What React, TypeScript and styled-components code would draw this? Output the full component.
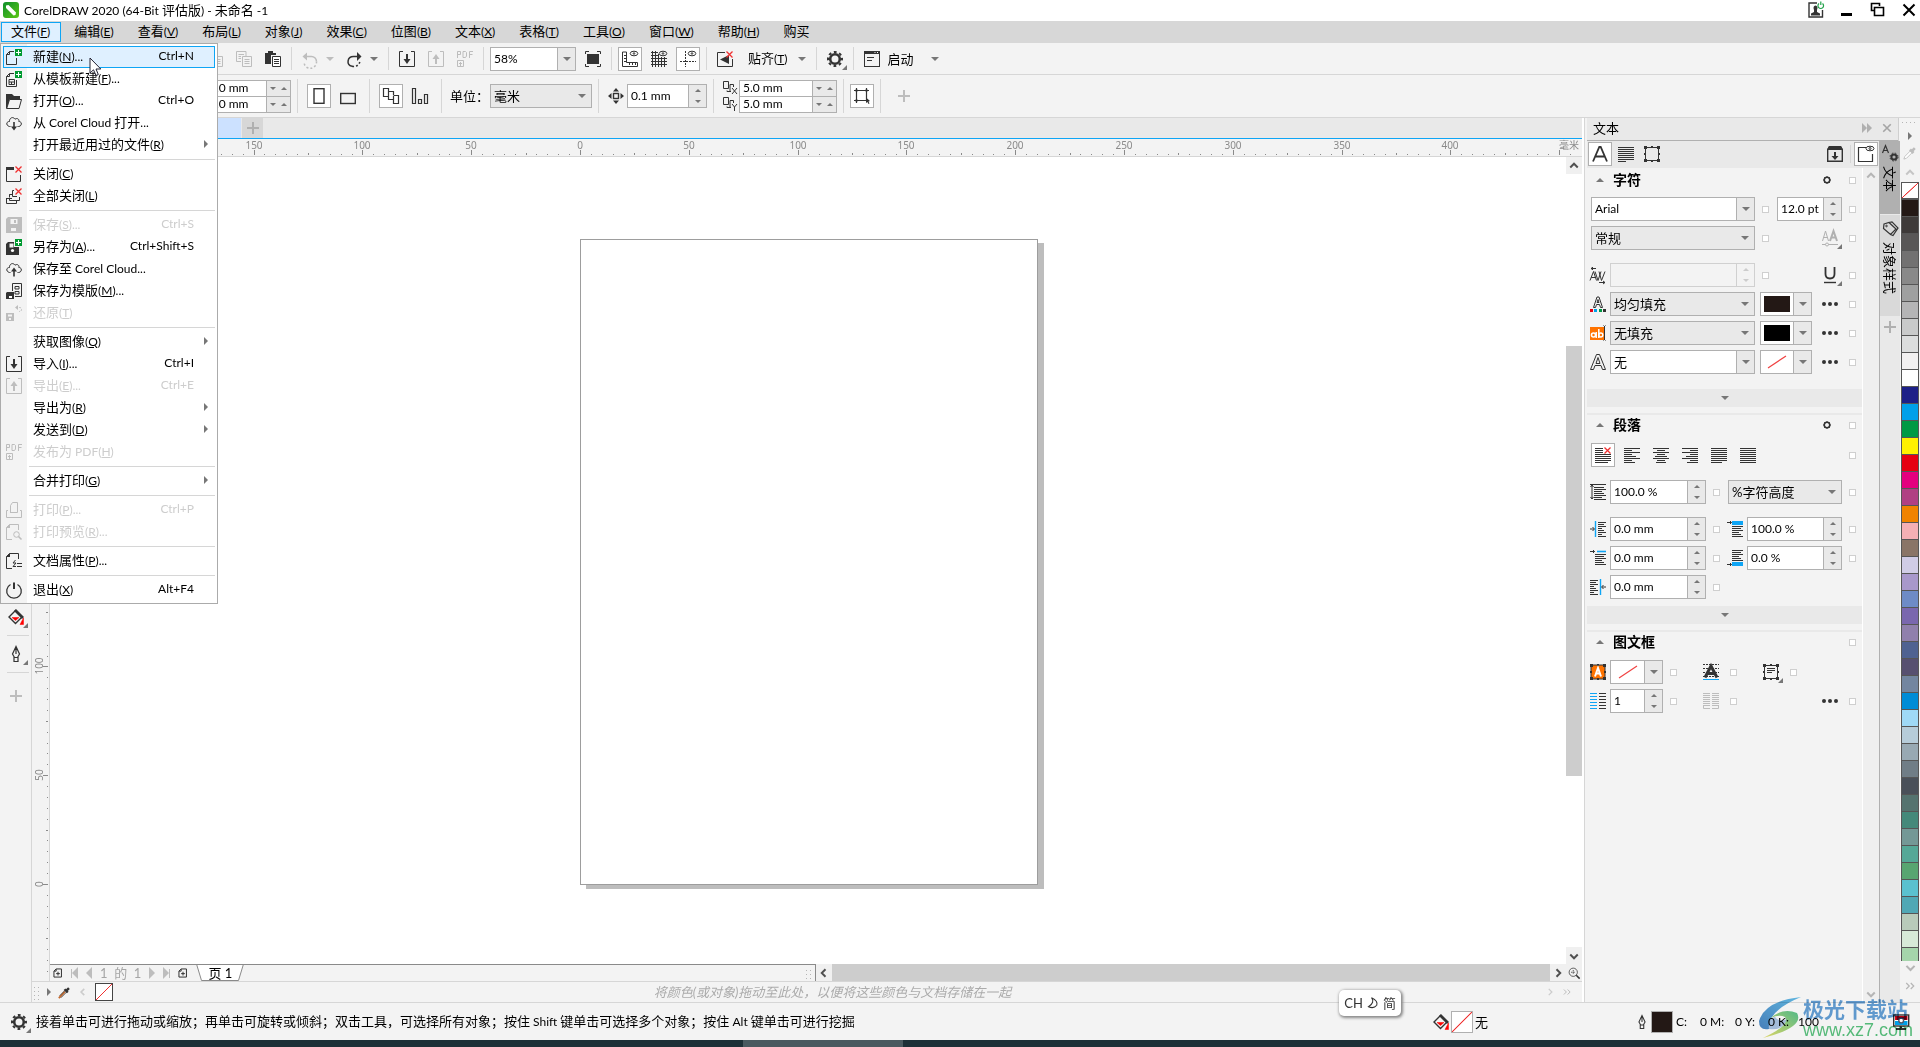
import React, { Fragment, ReactNode } from "react";
import styled, { createGlobalStyle, css } from "styled-components";

const c = {
  bar: "#f3f3f3",
  mid: "#e9e9e9",
  line: "#d6d6d6",
  edge: "#b0b0b0",
  ink: "#333333",
  off: "#bdbdbd",
  blue: "#0ea5f5",
  hot: "#dff0ff",
  grey: "#777777",
};

const Global = createGlobalStyle`
  *, *::before, *::after { box-sizing: border-box; }
  body { margin: 0; overflow: hidden; background: #fff; }
  body, button, input, select {
    font-family: Lato, "Noto Sans CJK SC", sans-serif;
    font-size: 13px;
    line-height: 16px;
    color: #000;
  }
  button { border: 0; padding: 0; background: none; }
  svg { display: block; flex: none; }
`;

/* ---------- text ---------- */

const Latin = styled.span`
  font-size: 12px;
`;

/* Latin runs are set one size below the Chinese; "&X" marks the access key. */
function Label({ text }: { text: string }) {
  const runs = text.match(/[\x20-\x7e…]+|[^\x20-\x7e…]+/g) || [];
  return (
    <span>
      {runs.map((r, i) => {
        if (!/[\x20-\x7e…]/.test(r)) return <Fragment key={i}>{r}</Fragment>;
        const at = r.indexOf("&");
        return (
          <Latin key={i}>
            {at < 0 ? r : (
              <>
                {r.slice(0, at)}
                <u>{r[at + 1]}</u>
                {r.slice(at + 2)}
              </>
            )}
          </Latin>
        );
      })}
    </span>
  );
}

/* ---------- icons, 16 x 16 ---------- */

const Svg = styled.svg.attrs({ viewBox: "0 0 16 16", "aria-hidden": true })<{ $s?: number; $c?: string }>`
  width: ${(p) => p.$s || 16}px;
  height: ${(p) => p.$s || 16}px;
  color: ${(p) => p.$c || c.ink};
  fill: none;
  stroke: currentColor;
  overflow: visible;
`;

const plusBadge = (
  <g stroke="none">
    <rect x="9" y="0" width="7" height="7" fill="#009a30" />
    <path d="M12 1h1v2h2v1h-2v2h-1v-2h-2v-1h2z" fill="#fff" />
  </g>
);
const redX = <path d="M9.5 .5l6 6M15.5 .5l-6 6" stroke="#f03030" strokeWidth="1.3" />;
const fillDot = { fill: "currentColor", stroke: "none" };
const lines = (rows: [number, number][], step = 2) => (
  <path d={rows.map(([a, b], i) => `M${a} ${i * step + 1.5}H${b}`).join("")} />
);
const frame = (
  <>
    <rect x="1.5" y="1.5" width="13" height="13" />
    <path {...fillDot} d="M0 0h3v3h-3zM13 0h3v3h-3zM0 13h3v3h-3zM13 13h3v3h-3zM7 0h2v2h-2zM7 14h2v2h-2zM0 7h2v2h-2zM14 7h2v2h-2z" />
  </>
);

const icons: Record<string, ReactNode> = {
  new: <><path d="M8 2.5H3.5L.5 5.5V15.5H10.5V9M.5 5.5H3.5V2.5" />{plusBadge}</>,
  template: <><path d="M8 2.5H3.5L.5 5.5V15.5H10.5V9M.5 5.5H3.5V2.5M3 8.5H8.500V13.500H3zM3 11H8.500M5.500 11V13.500" />{plusBadge}</>,
  open: <><path d="M.5 15V1.500H5.500L7 3.500H13.500V6" /><path {...fillDot} d="M0 1h6l2 2h6v3H4L1 15.500H0z" /><path d="M3.500 6.500H15.500L13 15.500H.7z" fill="#f3f3f3" /></>,
  cloudDown: <><path d="M4.500 11.500H3.500C-.5 10.500 .3 6.300 3.500 6.500C3.200 3 7 1 9 4.200C11.500 2.500 13.500 4.500 12.800 6.500C16.500 6.500 16 11.500 12.500 11.500H11.500" /><path d="M8 7V14" strokeWidth="1.600" /><path {...fillDot} d="M5 11.500h6L8 15.500z" /></>,
  cloudUp: <><path d="M4.500 11.500H3.500C-.5 10.500 .3 6.300 3.500 6.500C3.200 3 7 1 9 4.200C11.500 2.500 13.500 4.500 12.800 6.500C16.500 6.500 16 11.500 12.500 11.500H11.500" /><path d="M8 9V15.500" strokeWidth="1.600" /><path {...fillDot} d="M5 10.500h6L8 6.500z" /></>,
  close: <><path d="M8 1.500H.5V15.500H14.500V9" /><path {...fillDot} d="M0 1h8v3h-8z" />{redX}</>,
  closeAll: <><path d="M8 2.500H6.500V5M5 6.500H3.500V9M.5 10V15.500H10.500V13M.5 10.500H6M3.500 9.500V12.500H13.500V9M6.500 5V8.500H11M3.500 6.500H7" />{redX}</>,
  save: <><path {...fillDot} d="M2 0h14v16H0V2z" /><path d="M4.500 2h7v5h-7z" fill="#f3f3f3" stroke="none" /><path {...fillDot} d="M8 3h2v3h-2z" /><path d="M5 11h5v3h-5z" fill="#f3f3f3" stroke="none" /></>,
  saveAs: <><path {...fillDot} d="M2 3h6v5h5v8H0V5z" /><path d="M3.500 4.500h4v4h-4z" fill="#f3f3f3" stroke="none" /><circle cx="6.500" cy="11.500" r="1.600" fill="#fff" stroke="none" />{plusBadge}</>,
  saveTemplate: <><path d="M6.500 .5H15.500V13.500H9M6.500 .5V8M9 3.500H13V6H9zM9 8.500H13V11H9z" /><path {...fillDot} d="M1 9h7v7H0v-6z" /><path d="M3 13h3v2h-3z" fill="#fff" stroke="none" /></>,
  revert: <><path {...fillDot} d="M0 8h8v8h-8z" /><path d="M2 9.500h4v2h-4zM3 13h2v2h-2z" fill="#f3f3f3" stroke="none" /><path d="M10 2.500H13.500Q15.500 2.500 15.500 4.500T13 6.500" strokeDasharray="2 1" /><path {...fillDot} d="M9 2.500l3-2.500v5z" /></>,
  import: <><path d="M4 .5H.5V15.500H15.500V.5H12" /><path d="M8 3V9" strokeWidth="2" /><path {...fillDot} d="M4.500 8h7L8 13z" /></>,
  export: <><path d="M4 .5H.5V15.500H15.500V.5H12" /><path d="M8 13V7" strokeWidth="2" /><path {...fillDot} d="M4.500 8h7L8 3z" /></>,
  pdf: <><path d="M.5 7V.5H3.500V3.500H.5M6 .5H8.500L9.500 1.500V5L8.500 6.500H6zM12.500 7V.5H16M12.500 3.500H15.500" /><path d="M.5 9.500V15.500H6.500V9.500H.5M3.500 15V11M2 12.500H5" /></>,
  print: <><path d="M4.500 11V3.500L6.500 .5H11.500V10.500H4.500M2 8.500H.5V15.500H15.500V8.500H14" /></>,
  preview: <><path d="M6 15.500H.5V3.500L3.500 .5H12.500V6" /><path {...fillDot} d="M0 4l4-4v4z" /><circle cx="10.500" cy="10.500" r="2.800" /><path d="M12.500 12.500L15.500 15.500" strokeWidth="1.600" /></>,
  props: <><path d="M6 15.500H.5V3.500L3.500 .5H12.500V6M7 13.500H10M11 10.500H16M11 13.500H16M9.500 7L7 10H10L7 13.500" /><path {...fillDot} d="M0 4l4-4v4z" /></>,
  exit: <><path d="M4.500 2.500A7.300 7.300 0 1 0 11.500 2.500" strokeWidth="1.300" /><path d="M8 .5V7" strokeWidth="2" /></>,
  copy: <><path d="M10 5V.5H.5V10.500H5M2.500 3.500H8M2.500 5.500H5M2.500 7.500H5M6.500 5.500H15.500V15.500H6.500zM8.500 8.500H13.500M8.500 10.500H13.500M8.500 12.500H13.500" /></>,
  paste: <><path {...fillDot} d="M0 2h3V0h5v2h3v2H6v9H0z" /><path d="M7.500 5.500H15.500V15.500H7.500zM9 8.500H14M9 10.500H14M9 12.500H14" fill="#fff" /></>,
  undo: <><path d="M4 5.500H9A5 5 0 0 1 14.500 10.500" strokeWidth="1.500" /><path d="M14.500 10.500A5.500 5.500 0 0 1 2 11.500" strokeWidth="1.500" strokeDasharray="2 2" /><path {...fillDot} d="M.5 5.500L5 1.500v8z" /></>,
  redo: <><path d="M12 5.500H7.500A5.500 5 0 0 0 6 15.300" strokeWidth="1.500" /><path d="M6 15.300Q12.500 16.500 14.300 9.500" strokeWidth="1.500" strokeDasharray="2 2" /><path {...fillDot} d="M15.500 5.500L11 1v9z" /></>,
  full: <><path d="M4 .5H.5V3M12 .5H15.500V3M.5 13V15.500H4M15.500 13V15.500H12" /><path {...fillDot} d="M2 3h12v10h-12z" /></>,
  rulers: <><path d="M.5 1V15.500H15.500V11.500H4.500V1zM2 4.500H4M2 7.500H4M2 10.500H4M7.500 12V14M10.500 12V14M13.500 12V14" /><ellipse cx="12" cy="2.500" rx="3.800" ry="2.300" /><circle cx="12" cy="2.500" r=".8" /></>,
  grid: <><path d="M0 1.500H7M0 4.500H8M0 7.500H16M0 10.500H16M0 13.500H16M1.500 0V16M4.500 0V16M7.500 3V16M10.500 6V16M13.500 6V16" /><ellipse cx="12" cy="2.500" rx="3.800" ry="2.300" /><circle cx="12" cy="2.500" r=".8" /></>,
  guides: <><path d="M5.500 0V16" strokeDasharray="2 1" /><path d="M0 10.500H16" strokeDasharray="2 1" /><ellipse cx="12" cy="2.500" rx="3.800" ry="2.300" /><circle cx="12" cy="2.500" r=".8" /></>,
  snap: <><path d="M8 1.500H.5V15.500H15.500V8" /><path {...fillDot} d="M3 8.500L12 4v9z" />{redX}</>,
  gear: <><circle cx="8" cy="8" r="4.800" strokeWidth="2.600" /><circle cx="8" cy="8" r="7" strokeWidth="2" strokeDasharray="2.800 2.700" strokeDashoffset="1.400" /></>,
  cog: <><circle cx="8" cy="8" r="5.500" strokeWidth="3" /><path d="M8 0V3M8 13V16M0 8H3M13 8H16M2.500 2.500L4.500 4.500M13.500 2.500L11.500 4.500M2.500 13.500L4.500 11.500M13.500 13.500L11.500 11.500" strokeWidth="2" /></>,
  launch: <><rect x=".5" y=".5" width="15" height="15" /><path {...fillDot} d="M0 0h16v3h-16z" /><path d="M10.500 1.500h1M13 1.500h1" stroke="#fff" /><path d="M3 6.500H10M3 9.500H8" /></>,
  portrait: <rect x="3" y=".7" width="10" height="14.600" strokeWidth="1.400" />,
  landscape: <rect x=".7" y="5.500" width="14.600" height="10" strokeWidth="1.400" />,
  pages: <><path d="M5.500 4V.5H.5V8.500H5.500M10.500 7V3.500H5.500V11.500H10.500V8M10.500 7.500H15.500V15.500H10.500V11" strokeWidth="1.200" /></>,
  bars: <><path d="M.5 .5H3.500V15.500H.5zM6.500 11.500H9.500V15.500H6.500zM12.500 6.500H15.500V15.500H12.500z" strokeWidth="1.200" /></>,
  nudge: <><rect x="5.500" y="5.500" width="5" height="5" strokeWidth="1.400" /><path {...fillDot} d="M8 0l3 3.500H5zM8 16l3-3.500H5zM0 8l3.500-3v6zM16 8l-3.500-3v6z" /></>,
  bounds: <><path d="M2.500 2.500H12.500V12.500H2.500zM0 2.500H15M0 12.500H10M2.500 0V15M12.500 0V9" strokeWidth="1.200" /><path {...fillDot} d="M1.500 1.500h2v2h-2zM11.500 1.500h2v2h-2zM1.500 11.500h2v2h-2zM12 9.500l4 3.500-1.500.5 1 2-1 .5-1-2-1.500 1z" /></>,
  A: <path d="M1 15.500L7.300 1H8.700L15 15.500M3.500 10.500H12.500" strokeWidth="1.800" />,
  para: lines([[0, 16], [0, 16], [0, 16], [0, 16], [0, 16], [0, 16], [0, 16], [0, 8]]),
  frame,
  dockImport: <><path d="M2.500 .7H13.500L15.300 3.500V15.300H.7V3.500z" strokeWidth="1.400" /><path {...fillDot} d="M2 0h12l2 4h-16z" /><path d="M8 6V11" strokeWidth="2" /><path {...fillDot} d="M4.500 10h7L8 14z" /></>,
  dockView: <><path d="M8 1.500H.5V15.500H14.500V8" strokeWidth="1.200" /><ellipse cx="12" cy="2.500" rx="4" ry="2.300" /><circle cx="12" cy="2.500" r="1" /></>,
  kern: <><path d="M0 13.500L3.500 4.500L6.500 13.500M1.200 10.500H5.500M5 4.500L8 13.500L11 4.500M9 4.500L11.500 13.500L15 4.500" /><path d="M1 1.500H6M3 .2L1 1.500L3 2.800M9 15.500H15M13 14L15 15.500L13 17" /></>,
  fillA: <><path d="M3.500 11.500L7 1H9L12.500 11.500H10.500L9.500 8.500H6.500L5.500 11.500zM7 6.500L8 3.500L9 6.500z" /><g stroke="none"><path d="M0 13h3v3h-3z" fill="#e60012" /><path d="M4 13h3v3h-3z" fill="#00a0e9" /><path d="M9 13h3v3h-3z" fill="#009944" /><path d="M13 13h3v3h-3z" fill="#333" /></g></>,
  fillAb: <><path d="M0 2h14v13h-14z" fill="#ff7300" stroke="none" /><circle cx="3.500" cy="10" r="2" stroke="#fff" strokeWidth="1.600" /><path d="M6.200 7V13M8.800 4V13" stroke="#fff" strokeWidth="1.500" /><circle cx="10.800" cy="10" r="2" stroke="#fff" strokeWidth="1.500" /><path d="M13.500 .5l1 1l1-1M14.500 1V15M13.500 15.500l1-1l1 1" /></>,
  outlineA: <path d="M.5 15.500L6.500 .5H9.500L15.500 15.500H12.500L11 11.500H5L3.500 15.500zM6 9.500L8 3.500L10 9.500z" />,
  caps: <><path d="M.5 11L3.500 1L6.500 11M1.500 7.500H5.500" /><path d="M8 11L11.500 1L15 11M9.500 7.500H14" strokeWidth="2" /><path d="M0 14.500H16" /><circle cx="5" cy="14.500" r="1.500" fill="#f3f3f3" /></>,
  under: <><path d="M3.500 0V7Q3.500 11.500 8 11.500T12.500 7V0" strokeWidth="1.800" /><path d="M2 15.500H14" strokeWidth="1.400" /></>,
  alNone: <><path d="M0 1.500H8M0 3.500H8M0 5.500H8M0 7.500H16M0 9.500H16M0 11.500H16M0 13.500H16M0 15.500H13" />{redX}</>,
  alLeft: lines([[0, 16], [0, 8], [0, 16], [0, 8], [0, 12], [0, 16], [0, 8], [0, 11]]),
  alCenter: lines([[0, 16], [4, 12], [0, 16], [4, 12], [2, 14], [0, 16], [4, 12], [3, 13]]),
  alRight: lines([[0, 16], [8, 16], [0, 16], [8, 16], [4, 16], [0, 16], [8, 16], [5, 16]]),
  alJust: lines([[0, 16], [0, 16], [0, 16], [0, 16], [0, 16], [0, 16], [0, 16], [0, 11]]),
  alFull: lines([[0, 16], [0, 16], [0, 16], [0, 16], [0, 16], [0, 16], [0, 16], [0, 16]]),
  leading: <><path d="M0 .5H16M4 3.500H14M4 5.500H16M4 7.500H12M4 9.500H14M4 11.500H16M4 13.500H12M4 15.500H16M2 1V15M.5 3L2 1L3.500 3M.5 13L2 15L3.500 13" /></>,
  indLeft: <><path d="M5.500 0V16" stroke={c.blue} strokeWidth="1.400" /><path d="M8 1.500H16M8 3.500H14M8 5.500H16M8 7.500H12M8 9.500H14M8 11.500H16M8 13.500H12M8 15.500H16M0 8H4M2.500 6L4.500 8L2.500 10" /></>,
  indFirst: <><path d="M7 1.500H16" stroke={c.blue} strokeWidth="1.600" /><path d="M5 4.500H16M5 6.500H14M5 8.500H16M5 10.500H12M5 12.500H14M5 14.500H16M0 1.500H4.500M3 0L4.500 1.500L3 3" /></>,
  indRight: <><path d="M10.500 0V16" stroke={c.blue} strokeWidth="1.400" /><path d="M0 1.500H8M0 3.500H6M0 5.500H8M0 7.500H4M0 9.500H6M0 11.500H8M0 13.500H4M0 15.500H8M12 8H16M13.500 6L11.500 8L13.500 10" /></>,
  spBefore: <><path d="M5 0H16V4H5z" fill={c.blue} stroke="none" /><path d="M5 5.500H16M5 7.500H14M5 9.500H16M5 11.500H12M5 13.500H14M5 15.500H16M0 1.500H4.500M3 0L4.500 1.500L3 3" /></>,
  spAfter: <><path d="M5 12H16V16H5z" fill={c.blue} stroke="none" /><path d="M5 .5H16M5 2.500H14M5 4.500H16M5 6.500H12M5 8.500H14M5 10.500H16M0 14.500H4.500M3 13L4.500 14.500L3 16" /></>,
  boxA: <><rect x="1" y="1" width="14" height="14" fill="#ff7300" /><path {...fillDot} d="M0 0h3v3h-3zM13 0h3v3h-3zM0 13h3v3h-3zM13 13h3v3h-3zM7 0h2v2h-2zM7 14h2v2h-2zM0 7h2v2h-2zM14 7h2v2h-2z" /><path d="M5 12.500L8 4L11 12.500M6 9.500H10" stroke="#fff" strokeWidth="2" /></>,
  lineA: <><path d="M0 .5H16M0 4.500H16M0 8.500H16M0 12.500H16" strokeDasharray="2 1" /><path d="M2 13.500L8 2L14 13.500M5 9.500H11" strokeWidth="3" /><path d="M0 15.500H16" stroke={c.blue} /></>,
  frameText: <>{frame}<path d="M4 4.500H12M4 6.500H12M4 8.500H9" /></>,
  cols: <><path d="M0 .5H7M0 3.500H7M0 6.500H7M0 9.500H7M0 12.500H7M0 15.500H7" stroke={c.blue} /><path d="M9 .5H16M9 3.500H16M9 6.500H16M9 9.500H16M9 12.500H16M9 15.500H16" /></>,
  colsOff: <path d="M0 .5H7M0 2.500H7M0 4.500H7M0 6.500H7M0 8.500H7M0 10.500H7M0 12.500H7M.5 13V15.500H7M9 .5H16M9 2.500H16M9 4.500H16M9 6.500H16M9 8.500H16M9 10.500H16M9 12.500H16M9 15.500H15.500V13" />,
  dots: <path {...fillDot} d="M0 8a2 2 0 1 1 4 0a2 2 0 1 1-4 0zM6 8a2 2 0 1 1 4 0a2 2 0 1 1-4 0zM12 8a2 2 0 1 1 4 0a2 2 0 1 1-4 0z" />,
  plus: <path d="M8 2V14M2 8H14" strokeWidth="2" />,
  bucket: <><path d="M7.500 1.500L1 8L7.500 14.500L14 8z" strokeWidth="1.400" /><path {...fillDot} d="M8 0l8 8-2 2L6 2z" /><path d="M4 8.500h7l-3.500 3zM12 15.500h3.500V9z" fill="#f00" stroke="#f00" strokeWidth=".5" /></>,
  pen: <><path d="M8 .5L4.500 8L6.500 11.500H9.500L11.500 8zM6 11.500H10V15.500H6zM8 1V8" strokeWidth="1.200" /></>,
  dropper: <><path d="M1 15L2 12L8.500 5.500L10.500 7.500L4 14z" fill="#fff" /><path d="M8 4L12 8M10 6L13.500 2.500" strokeWidth="3" /></>,
  dropperDoc: <><path d="M1 15L8.500 7" stroke="#c66a2e" strokeWidth="2.200" /><path d="M3.500 14.500L10.500 7.500M2 12L8.500 5.500" /><path d="M8 4L12 8M10 6L13.500 2.500" strokeWidth="3" /></>,
  styles: <><path d="M2 3L7 1.500L14 8L8.500 13.500L1.500 7.500zM7 1.500L10 .8L16 7L11 14.500L8.500 13.500" strokeWidth="1.200" /><circle cx="4.500" cy="5" r=".8" /></>,
  styleA: <><path d="M.5 8L3.500 .5L6.500 8M1.500 5.500H5.500" strokeWidth="1.200" /><circle cx="12" cy="12" r="2.600" strokeWidth="2" /><circle cx="12" cy="12" r="4" strokeDasharray="1.600 1.600" /></>,
  zoomer: <><circle cx="7" cy="7" r="5.500" /><path d="M7 4V10M4 7H10" strokeDasharray="2 1" /><path d="M11 11L15.500 15.500" strokeWidth="2" /></>,
  monitor: <><rect x=".7" y="1" width="15" height="11" strokeWidth="1.400" fill="#fff" /><path d="M2 2h12.500v4H2z" fill="#e60012" stroke="none" /><path d="M2 7h12.500v4H2z" fill="#00a0e9" stroke="none" /><circle cx="8.200" cy="6.500" r="2.400" fill="#fff" stroke="#556" strokeWidth="1.400" /><path d="M3 15H13M8 12V15" strokeWidth="2" /></>,
  addPage: <path d="M1.500 14.500V5L5 1.500H13.500V14.500zM1.500 5H5V1.500M8 6V12M5 9H11" strokeWidth="1.600" />,
  user: <><path d="M9 1H1V15H14.500V8" strokeWidth="1.400" /><path {...fillDot} d="M3 13.500v-2l3-1.500v-2q-1.500-4 1.500-4.500q3 .5 1.500 4.500v2l3 1.500v2z" /><path d="M11 1.500A2.800 2.800 0 1 0 14.500 1.500M12.800-.5V3" stroke="#22a24a" strokeWidth="1.200" /></>,
};

function Icon({ n, s, col }: { n: string; s?: number; col?: string }) {
  return <Svg $s={s} $c={col}>{icons[n]}</Svg>;
}

const Tri = styled.i<{ $d?: "up" | "down" | "right" | "left"; $c?: string; $s?: number }>`
  flex: none;
  width: 0;
  height: 0;
  ${(p) => {
    const s = p.$s || 4;
    const k = p.$c || c.grey;
    const t = `${s}px solid transparent`;
    if (p.$d === "up") return css`border-left: ${t}; border-right: ${t}; border-bottom: ${s}px solid ${k};`;
    if (p.$d === "right") return css`border-top: ${t}; border-bottom: ${t}; border-left: ${s}px solid ${k};`;
    if (p.$d === "left") return css`border-top: ${t}; border-bottom: ${t}; border-right: ${s}px solid ${k};`;
    return css`border-left: ${t}; border-right: ${t}; border-top: ${s}px solid ${k};`;
  }}
`;

const chevrons = { up: "M3 10L8 5L13 10", down: "M3 6L8 11L13 6", left: "M10 3L5 8L10 13", right: "M6 3L11 8L6 13", dbl: "M3 4L7 8L3 12M9 4L13 8L9 12" };
function Chevron({ d, s = 12, col = "#505050", w = 2.6 }: { d: keyof typeof chevrons; s?: number; col?: string; w?: number }) {
  return <Svg $s={s} $c={col}><path d={chevrons[d]} strokeWidth={w} /></Svg>;
}

/* ---------- frame ---------- */

const Shell = styled.div`
  position: relative;
  height: 100vh;
  display: flex;
  flex-direction: column;
  background: ${c.bar};
  overflow: hidden;
`;

const TitleBar = styled.header`
  height: 21px;
  flex: none;
  display: flex;
  align-items: center;
  gap: 5px;
  padding: 0 3px 1px;
  background: #fff;
`;

const AppTitle = styled.h1`
  flex: 1;
  margin: 0;
  font-size: 13px;
  font-weight: 400;
  line-height: 18px;
`;

const WindowButtons = styled.div`
  display: flex;
  align-items: center;
  gap: 15px;
`;

const WinButton = styled.button`
  width: 16px;
  height: 16px;
`;

const MenuBar = styled.nav`
  position: relative;
  z-index: 5;
  flex: none;
  height: 22px;
  display: flex;
  align-items: center;
  gap: 3px;
  padding-left: 1px;
  background: #d7d7d7;
`;

const MenuButton = styled.button<{ $open?: boolean }>`
  height: 20px;
  padding: 0 10px 2px 9px;
  border: 1px solid ${(p) => (p.$open ? c.blue : "transparent")};
  background: ${(p) => (p.$open ? c.hot : "transparent")};
`;

const Dropdown = styled.div`
  position: absolute;
  left: 0;
  top: 22px;
  width: 218px;
  padding: 2px;
  border: 1px solid #ababab;
  background: linear-gradient(90deg, ${c.bar} 26px, #fff 26px);
`;

const Entry = styled.button<{ $hot?: boolean; $off?: boolean }>`
  width: 100%;
  height: 22px;
  display: grid;
  grid-template-columns: 17px 1fr auto 8px;
  column-gap: 10px;
  align-items: center;
  padding: 0 2px 2px;
  text-align: left;
  white-space: nowrap;
  color: ${(p) => (p.$off ? "#cdcdcd" : "#000")};
  border: 1px solid ${(p) => (p.$hot ? c.blue : "transparent")};
  background: ${(p) => (p.$hot ? c.hot : "transparent")};
  svg { margin-top: 2px; }
`;

const Shortcut = styled.span`
  font-size: 12px;
`;

const Rule = styled.hr`
  height: 1px;
  margin: 3px 0 3px 26px;
  border: 0;
  background: ${c.line};
`;

type Item = { t: string; i?: string; k?: string; off?: boolean; sub?: boolean; hot?: boolean } | null;
const fileMenu: Item[] = [
  { t: "新建(&N)...", i: "new", k: "Ctrl+N", hot: true },
  { t: "从模板新建(&F)...", i: "template" },
  { t: "打开(&O)...", i: "open", k: "Ctrl+O" },
  { t: "从 Corel Cloud 打开...", i: "cloudDown" },
  { t: "打开最近用过的文件(&R)", sub: true },
  null,
  { t: "关闭(&C)", i: "close" },
  { t: "全部关闭(&L)", i: "closeAll" },
  null,
  { t: "保存(&S)...", i: "save", k: "Ctrl+S", off: true },
  { t: "另存为(&A)...", i: "saveAs", k: "Ctrl+Shift+S" },
  { t: "保存至 Corel Cloud...", i: "cloudUp" },
  { t: "保存为模版(&M)...", i: "saveTemplate" },
  { t: "还原(&T)", i: "revert", off: true },
  null,
  { t: "获取图像(&Q)", sub: true },
  { t: "导入(&I)...", i: "import", k: "Ctrl+I" },
  { t: "导出(&E)...", i: "export", k: "Ctrl+E", off: true },
  { t: "导出为(&R)", sub: true },
  { t: "发送到(&D)", sub: true },
  { t: "发布为 PDF(&H)", i: "pdf", off: true },
  null,
  { t: "合并打印(&G)", sub: true },
  null,
  { t: "打印(&P)...", i: "print", k: "Ctrl+P", off: true },
  { t: "打印预览(&R)...", i: "preview", off: true },
  null,
  { t: "文档属性(&P)...", i: "props" },
  null,
  { t: "退出(&X)", i: "exit", k: "Alt+F4" },
];

function FileMenu() {
  return (
    <Dropdown role="menu" aria-label="文件">
      {fileMenu.map((m, i) =>
        m === null ? <Rule key={i} /> : (
          <Entry key={i} role="menuitem" $hot={m.hot} $off={m.off}>
            {m.i ? <Icon n={m.i} col={m.off ? c.off : undefined} /> : <span />}
            <Label text={m.t} />
            <Shortcut>{m.k}</Shortcut>
            {m.sub ? <Tri $d="right" /> : <span />}
          </Entry>
        )
      )}
    </Dropdown>
  );
}

const Pointer = styled.svg`
  position: absolute;
  z-index: 6;
  left: 89px;
  top: 57px;
  width: 13px;
  height: 20px;
`;

/* ---------- toolbars ---------- */

const Toolbar = styled.div<{ $h: number; $start: number }>`
  flex: none;
  height: ${(p) => p.$h}px;
  display: flex;
  align-items: center;
  padding-left: ${(p) => p.$start}px;
  border-bottom: 1px solid ${c.line};
  white-space: nowrap;
`;

const Divider = styled.i<{ $m?: number }>`
  align-self: stretch;
  width: 1px;
  margin: 4px ${(p) => p.$m ?? 6}px;
  background: ${c.line};
`;

const Tool = styled.button<{ $on?: boolean; $w?: number }>`
  flex: none;
  width: ${(p) => p.$w || 24}px;
  height: 24px;
  display: flex;
  align-items: center;
  justify-content: center;
  border: 1px solid ${(p) => (p.$on ? c.edge : "transparent")};
  background: ${(p) => (p.$on ? "#fff" : "transparent")};
`;

const WordTool = styled.button<{ $gap?: number }>`
  height: 24px;
  display: flex;
  align-items: center;
  gap: ${(p) => p.$gap || 10}px;
`;

const Gap = styled.i<{ $w: number }>`
  flex: none;
  width: ${(p) => p.$w}px;
`;

const Corner = styled.span`
  display: grid;
  > * { grid-area: 1 / 1; }
`;
const CornerMark = styled.i`
  align-self: end;
  justify-self: end;
  margin: 0 -4px -3px 0;
  border-left: 5px solid transparent;
  border-bottom: 5px solid ${c.grey};
`;

/* ---------- fields ---------- */

const FieldBox = styled.span<{ $w: number; $h?: number; $fill?: string; $dim?: boolean }>`
  flex: none;
  width: ${(p) => p.$w}px;
  height: ${(p) => p.$h || 24}px;
  display: flex;
  border: 1px solid ${(p) => (p.$dim ? "#d0d0d0" : c.edge)};
  background: ${(p) => p.$fill || "#fff"};
`;

const TextInput = styled.input`
  flex: 1;
  min-width: 0;
  width: 0;
  padding: 0 0 0 3px;
  border: 0;
  outline: 0;
  background: none;
  font-size: 12px;
`;

const Steps = styled.span<{ $row?: boolean; $dim?: boolean }>`
  width: ${(p) => (p.$row ? 24 : 18)}px;
  display: flex;
  flex-direction: ${(p) => (p.$row ? "row-reverse" : "column")};
  align-items: center;
  justify-content: space-around;
  border-left: 1px solid ${(p) => (p.$dim ? "#d0d0d0" : c.edge)};
  background: ${(p) => (p.$dim ? c.bar : c.mid)};
`;

const StepButton = styled.button`
  display: flex;
`;

function Spin({ w, v, name, row, h, dim }: { w: number; v: string; name: string; row?: boolean; h?: number; dim?: boolean }) {
  const col = dim ? "#cccccc" : c.grey;
  return (
    <FieldBox $w={w} $h={h} $dim={dim} $fill={dim ? c.bar : undefined}>
      <TextInput aria-label={name} defaultValue={v} disabled={dim} />
      <Steps $row={row} $dim={dim}>
        <StepButton aria-label={`${name} +`}><Tri $d="up" $s={3} $c={col} /></StepButton>
        <StepButton aria-label={`${name} -`}><Tri $s={3} $c={col} /></StepButton>
      </Steps>
    </FieldBox>
  );
}

const SelectBox = styled.span<{ $w: number; $white?: boolean }>`
  flex: none;
  width: ${(p) => p.$w}px;
  height: 24px;
  display: grid;
  border: 1px solid ${c.edge};
  background: ${(p) => (p.$white ? "#fff" : c.mid)};
  > * { grid-area: 1 / 1; }
`;

const NativeSelect = styled.select<{ $small?: boolean }>`
  appearance: none;
  width: 100%;
  padding: 0 18px 0 3px;
  border: 0;
  outline: 0;
  border-radius: 0;
  background: none;
  font-size: ${(p) => (p.$small ? 12 : 13)}px;
`;

const SelectArrow = styled.span<{ $white?: boolean }>`
  justify-self: end;
  width: 18px;
  display: flex;
  align-items: center;
  justify-content: center;
  pointer-events: none;
  ${(p) => p.$white && css`border-left: 1px solid ${c.edge}; background: ${c.mid};`}
`;

function Select({ w, v, name, white, small, id }: { w: number; v: string; name?: string; white?: boolean; small?: boolean; id?: string }) {
  return (
    <SelectBox $w={w} $white={white}>
      <NativeSelect id={id} aria-label={name} $small={small} defaultValue={v}><option>{v}</option></NativeSelect>
      <SelectArrow $white={white}><Tri /></SelectArrow>
    </SelectBox>
  );
}

const ColourFace = styled.span`
  flex: 1;
  display: flex;
  align-items: center;
  justify-content: center;
`;
const ColourChip = styled.i<{ $c: string }>`
  width: 26px;
  height: 16px;
  background: ${(p) => p.$c};
`;
const ColourButton = styled.button<{ $w: number }>`
  flex: none;
  width: ${(p) => p.$w}px;
  height: 24px;
  display: flex;
  align-items: stretch;
  border: 1px solid ${c.edge};
  background: #fff;
`;

function Colour({ w = 52, col, name }: { w?: number; col?: string; name: string }) {
  return (
    <ColourButton $w={w} aria-label={name}>
      <ColourFace>
        {col ? <ColourChip $c={col} /> : <svg width="20" height="14"><path d="M1 13L19 1" stroke="#f04040" strokeWidth="1.200" /></svg>}
      </ColourFace>
      <SelectArrow $white><Tri /></SelectArrow>
    </ColourButton>
  );
}

const Lock = styled.input.attrs({ type: "checkbox", "aria-label": "锁定" })`
  appearance: none;
  flex: none;
  width: 7px;
  height: 7px;
  margin: 0;
  border: 1px solid #cfcfcf;
  background: #fff;
`;

const Stack = styled.span`
  display: flex;
  flex-direction: column;
  > * + * { margin-top: -1px; }
`;

const DupIcons = styled.svg`
  width: 16px;
  height: 34px;
  margin-left: 3px;
  fill: none;
  stroke: ${c.ink};
`;

/* ---------- body ---------- */

const Body = styled.div`
  flex: 1;
  min-height: 0;
  display: flex;
`;

const Toolbox = styled.aside`
  flex: none;
  width: 32px;
  display: flex;
  flex-direction: column;
  align-items: center;
  padding-top: 487px;
  border-right: 1px solid ${c.line};
`;

const ToolboxRule = styled.i`
  width: 22px;
  height: 1px;
  margin: 6px 0 6px 5px;
  background: ${c.line};
`;

const Centre = styled.main`
  flex: 1;
  min-width: 0;
  display: flex;
  flex-direction: column;
`;

const DocTabs = styled.div`
  flex: none;
  height: 21px;
  display: flex;
  gap: 1px;
  padding-left: 100px;
  border-bottom: 1px solid ${c.blue};
  background: ${c.mid};
`;
const DocTab = styled.button`
  width: 109px;
  background: #cce1ff;
`;
const AddTab = styled.button`
  width: 21px;
  display: flex;
  align-items: center;
  justify-content: center;
  background: #d7d7d7;
`;

const RulerTop = styled.svg`
  width: 100%;
  height: 18px;
  border-bottom: 1px solid ${c.line};
`;
const RulerSide = styled.svg`
  width: 18px;
  height: 100%;
  border-right: 1px solid ${c.line};
`;
const RulerText = styled.text`
  font-family: "Noto Sans", "Noto Sans CJK SC", sans-serif;
  font-size: 10px;
  fill: #8a8a8a;
  text-anchor: middle;
`;

const STEP = 10.88; // one 5 mm division at 58 %

function TopRuler() {
  const zero = 548;
  const ticks = Array.from({ length: 132 }, (_, i) => i - 40);
  return (
    <RulerTop aria-hidden>
      {ticks.map((t) => {
        const x = Math.round(zero + t * STEP);
        const len = t % 10 === 0 ? 5 : t % 5 === 0 ? 2 : 1;
        return <rect key={t} x={x} y={16 - len} width="1" height={len} fill="#8a8a8a" />;
      })}
      {Array.from({ length: 12 }, (_, i) => i - 3).map((n) => (
        <RulerText key={n} x={Math.round(zero + n * 10 * STEP)} y="10">{Math.abs(n * 50)}</RulerText>
      ))}
      <RulerText x="1537" y="10">毫米</RulerText>
    </RulerTop>
  );
}

function SideRuler() {
  const zero = 727;
  const ticks = Array.from({ length: 76 }, (_, i) => i - 67);
  return (
    <RulerSide aria-hidden>
      {ticks.map((t) => {
        const y = Math.round(zero + t * STEP);
        const len = t % 10 === 0 ? 5 : t % 5 === 0 ? 2 : 1;
        return <rect key={t} x={16 - len} y={y} width={len} height="1" fill="#8a8a8a" />;
      })}
      {[0, 1, 2].map((n) => {
        const y = Math.round(zero - n * 10 * STEP);
        return <RulerText key={n} transform={`rotate(-90 11 ${y})`} x="11" y={y}>{n * 50}</RulerText>;
      })}
    </RulerSide>
  );
}

const Desk = styled.div`
  flex: 1;
  min-height: 0;
  display: grid;
  grid-template-columns: 18px 1fr;
`;
const DeskMain = styled.div`
  min-width: 0;
  display: flex;
  flex-direction: column;
`;
const CanvasRow = styled.div`
  flex: 1;
  min-height: 0;
  display: flex;
`;
const Canvas = styled.div`
  position: relative;
  flex: 1;
  background: #fff;
  overflow: hidden;
`;
const Page = styled.div`
  position: absolute;
  left: 530px;
  top: 82px;
  width: 458px;
  height: 646px;
  border: 1px solid #9d9d9d;
  background: #fff;
  box-shadow: 6px 4px 0 #bdbdbd;
`;
const VScroll = styled.div`
  flex: none;
  width: 16px;
  display: flex;
  flex-direction: column;
  background: #fff;
`;
const ScrollButton = styled.button`
  flex: none;
  width: 16px;
  height: 17px;
  display: flex;
  align-items: center;
  justify-content: center;
  background: #f0f0f0;
`;
const Thumb = styled.i<{ $n: number; $track?: boolean }>`
  flex: ${(p) => p.$n};
  background: ${(p) => (p.$track ? "#fff" : "#cdcdcd")};
`;

const BottomBar = styled.div`
  flex: none;
  height: 17px;
  display: flex;
`;
const PageNav = styled.div`
  width: 50%;
  display: flex;
  align-items: center;
  gap: 8px;
  padding-left: 3px;
  border: solid #8a8a8a;
  border-width: 1px 1px 0 0;
`;
const NavButton = styled.button`
  display: flex;
  align-items: center;
`;
const NavStop = styled.i`
  width: 1px;
  height: 9px;
  background: ${c.off};
`;
const PageCount = styled.span`
  color: #a5a5a5;
`;
const PageTab = styled.button`
  display: grid;
  place-items: center;
  > * { grid-area: 1 / 1; }
`;
const HScroll = styled.div`
  flex: 1;
  display: flex;
  background: #fff;
`;

const Grip = styled.i<{ $w: number; $h: number; $end?: boolean }>`
  width: ${(p) => p.$w}px;
  height: ${(p) => p.$h}px;
  ${(p) => p.$end && css`margin-left: auto; margin-right: 2px;`}
  background-image:
    linear-gradient(${c.bar} 3px, transparent 3px),
    linear-gradient(90deg, #b5b5b5 1px, transparent 1px);
  background-size: 4px 4px, 4px 4px;
`;

const DocPalette = styled.div`
  flex: none;
  height: 21px;
  display: flex;
  align-items: center;
  gap: 7px;
  padding: 0 10px 0 2px;
  border-top: 1px solid ${c.line};
`;
const Hint = styled.em`
  flex: 1;
  padding-left: 7px;
  text-align: center;
  color: #ababab;
`;
const NoneSwatch = styled.button<{ $w: number; $h: number; $edge: string }>`
  flex: none;
  width: ${(p) => p.$w}px;
  height: ${(p) => p.$h}px;
  border: 1px solid ${(p) => p.$edge};
  background: linear-gradient(to bottom right, #fff 47%, #f03030 49%, #f03030 51%, #fff 53%);
`;

/* ---------- dock ---------- */

const Dock = styled.section`
  flex: none;
  width: 317px;
  display: flex;
  flex-direction: column;
  border-left: 2px solid #fff;
  border-right: 1px solid #cfcfcf;
`;
const DockInner = styled.div`
  flex: 1;
  min-height: 0;
  display: flex;
  flex-direction: column;
  border-left: 1px solid ${c.line};
`;
const DockHead = styled.div`
  flex: none;
  height: 23px;
  display: flex;
  align-items: center;
  gap: 10px;
  margin-left: 2px;
  padding: 0 6px 2px;
  border-bottom: 1px solid ${c.edge};
  background: ${c.mid};
`;
const DockTitle = styled.h2`
  flex: 1;
  margin: 0;
  font-size: 13px;
  font-weight: 400;
`;
const DockColumns = styled.div`
  flex: 1;
  min-height: 0;
  display: flex;
  margin-left: 2px;
`;
const DockMain = styled.div`
  flex: 1;
  display: flex;
  flex-direction: column;
`;
const DockTools = styled.div`
  flex: none;
  height: 27px;
  display: flex;
  align-items: center;
  gap: 2px;
  padding: 0 1px 1px;
  background: ${c.mid};
`;
const Push = styled.i`
  flex: 1;
`;
const DockScroll = styled.div`
  flex: 1;
  min-height: 0;
  display: flex;
`;
const Form = styled.form`
  flex: 1;
  border-right: 1px solid #fff;
`;
const ScrollRail = styled.div`
  width: 16px;
  display: flex;
  flex-direction: column;
  align-items: center;
  justify-content: space-between;
  padding: 2px 0;
  background: #efefef;
`;
const GroupHead = styled.div`
  height: 24px;
  display: flex;
  align-items: center;
  gap: 9px;
  padding: 0 6px 0 9px;
`;
const GroupName = styled.h3`
  flex: 1;
  margin: 0;
  font-size: 14px;
  font-weight: 700;
`;
const Rows = styled.div<{ $top?: number }>`
  display: flex;
  flex-direction: column;
  gap: 5px;
  padding: ${(p) => p.$top ?? 5}px 6px 0 3px;
`;
const Row = styled.div<{ $gap?: number }>`
  height: 24px;
  display: flex;
  align-items: center;
  gap: ${(p) => p.$gap ?? 7}px;
`;
const Lead = styled.span<{ $w?: number; $end?: boolean }>`
  flex: none;
  display: flex;
  align-items: center;
  justify-content: ${(p) => (p.$end ? "flex-end" : "flex-start")};
  gap: 4px;
  ${(p) => p.$w && css`width: ${p.$w}px;`}
`;
const Right = styled.span<{ $gap?: number }>`
  margin-left: auto;
  display: flex;
  align-items: center;
  gap: ${(p) => p.$gap ?? 7}px;
`;
const Pair = styled.span`
  display: flex;
  align-items: center;
  gap: 11px;
  margin-left: 19px;
`;
const Blank = styled.i<{ $h: number }>`
  height: ${(p) => p.$h}px;
`;
const Expander = styled.button<{ $top: number }>`
  width: 100%;
  height: 18px;
  margin-top: ${(p) => p.$top}px;
  display: flex;
  align-items: center;
  justify-content: center;
  background: ${c.mid};
`;
const GroupRule = styled.i`
  display: block;
  height: 2px;
  margin: 6px 0 -2px;
  background: ${c.mid};
`;
const AlignTools = styled.span`
  display: flex;
  gap: 5px;
  padding-left: 1px;
`;
const IconButton = styled.button`
  display: flex;
`;

const DockTabs = styled.div`
  flex: none;
  width: 21px;
  display: flex;
  flex-direction: column;
  gap: 1px;
  border-left: 1px solid ${c.edge};
  background: ${c.mid};
`;
const SideTab = styled.button<{ $on?: boolean; $h: number }>`
  height: ${(p) => p.$h}px;
  display: flex;
  flex-direction: column;
  align-items: center;
  gap: 5px;
  padding-top: ${(p) => (p.$on ? 4 : 6)}px;
  background: ${(p) => (p.$on ? "#b0b0b0" : "#d9d9d9")};
`;
const SideText = styled.span`
  writing-mode: vertical-rl;
  text-orientation: sideways;
`;
const SideAdd = styled.button`
  display: flex;
  justify-content: center;
  margin-top: 2px;
`;

const Palette = styled.aside`
  flex: none;
  width: 21px;
  padding: 0 1px 0 2px;
  display: flex;
  flex-direction: column;
  align-items: center;
`;
const PaletteTop = styled.div`
  flex: none;
  height: 64px;
  display: flex;
  flex-direction: column;
  align-items: center;
  justify-content: space-between;
  padding: 1px 0 3px;
`;
const Swatches = styled.div`
  flex: 1;
  min-height: 0;
  width: 18px;
  overflow: hidden;
  border: solid #565656;
  border-width: 0 1px;
`;
const Swatch = styled.button<{ $c: string }>`
  display: block;
  width: 16px;
  height: 17px;
  border-top: 1px solid #565656;
  background: ${(p) => p.$c};
`;
const PaletteEnd = styled.div`
  flex: none;
  height: 41px;
  display: flex;
  flex-direction: column;
  align-items: center;
  gap: 6px;
`;

const colours = [
  "#231815", "#3e3a39", "#595757", "#727171", "#898989", "#9fa0a0", "#b5b5b6", "#c9caca", "#dcdddd", "#f2f0f0", "#ffffff",
  "#1d2088", "#00a0e9", "#009944", "#fff100", "#e60012", "#e4007f", "#b04083", "#f08300", "#f5b0b5", "#8a7567", "#d0cce6",
  "#a898cb", "#6e8bc6", "#7a67ae", "#9080ac", "#4f6291", "#575070", "#7386a0", "#008cd6", "#9fd9f6", "#b6ccd9", "#98a9b3",
  "#707d86", "#4a5059", "#55736f", "#44897a", "#749896", "#55a897", "#58a571", "#5bc1cf", "#50a8b5", "#b8cbba", "#d7ead8", "#a5d5ab",
];

/* ---------- status ---------- */

const Status = styled.footer`
  flex: none;
  height: 38px;
  display: flex;
  align-items: center;
  padding: 0 11px;
  border-top: 1px solid ${c.line};
`;
const Tip = styled.span`
  margin-left: 9px;
  flex: 1;
`;
const FillInfo = styled.span<{ $w: number }>`
  flex: none;
  width: ${(p) => p.$w}px;
  display: flex;
  align-items: center;
  gap: 2px;
`;
const FillBlack = styled.button`
  width: 22px;
  height: 22px;
  border: 1px solid ${c.edge};
  background: #231815;
`;
const Ink = styled.span<{ $w: number }>`
  width: ${(p) => p.$w}px;
  margin-left: 1px;
  display: flex;
  justify-content: space-between;
  font-size: 12px;
`;

const Ime = styled.div`
  position: absolute;
  right: 519px;
  bottom: 31px;
  height: 26px;
  display: flex;
  align-items: center;
  gap: 4px;
  padding: 0 5px;
  border-radius: 5px;
  background: #fff;
  color: #333;
  box-shadow: 1px 1px 3px 1px #888;
`;

const Watermark = styled.div`
  position: absolute;
  right: 7px;
  bottom: 8px;
  display: flex;
  align-items: center;
  pointer-events: none;
  opacity: 0.85;
  mix-blend-mode: multiply;
`;
const MarkText = styled.div`
  display: flex;
  flex-direction: column;
  font-size: 21px;
  line-height: 24px;
  font-weight: 700;
  color: #4a90d0;
`;
const MarkUrl = styled.span`
  font-family: "Liberation Sans", sans-serif;
  font-size: 18px;
  line-height: 18px;
  font-weight: 400;
  color: #3cb868;
`;

const Taskbar = styled.div`
  flex: none;
  height: 7px;
  display: flex;
  overflow: hidden;
  background: #1d3037;
`;
const TaskActive = styled.i`
  width: 160px;
  margin-left: 743px;
  background: #4a5a60;
`;

export default function App() {
  const menus = ["编辑(&E)", "查看(&V)", "布局(&L)", "对象(&J)", "效果(&C)", "位图(&B)", "文本(&X)", "表格(&T)", "工具(&O)", "窗口(&W)", "帮助(&H)", "购买"];
  return (
    <Shell>
      <Global />
      <TitleBar>
        <svg width="16" height="16" viewBox="0 0 16 16" aria-hidden>
          <defs><linearGradient id="g" x1="0" y1="0" x2="1" y2="1"><stop offset="0" stopColor="#0f8f2c" /><stop offset="1" stopColor="#5cc814" /></linearGradient></defs>
          <rect width="16" height="16" rx="3" fill="url(#g)" />
          <path d="M3 3.500L5.500 3L13 10.500L12.500 13L10.500 13.500L3 6z" fill="#fff" />
        </svg>
        <AppTitle><Label text="CorelDRAW 2020 (64-Bit 评估版) - 未命名 -1" /></AppTitle>
        <WindowButtons>
          <WinButton aria-label="登录"><Icon n="user" /></WinButton>
          <WinButton aria-label="最小化"><Svg $c="#000"><path d="M2 12.500H13" strokeWidth="3" /></Svg></WinButton>
          <WinButton aria-label="还原"><Svg $c="#000"><path d="M4 8.500H1.500V1.500H9.500V4M4.500 5.500H13.500V13.500H4.500z" strokeWidth="1.600" /></Svg></WinButton>
          <WinButton aria-label="关闭"><Svg $c="#000"><path d="M2.500 2.500L13.500 13.500M13.500 2.500L2.500 13.500" strokeWidth="2" /></Svg></WinButton>
        </WindowButtons>
      </TitleBar>

      <MenuBar>
        <MenuButton $open><Label text="文件(&F)" /></MenuButton>
        {menus.map((m) => <MenuButton key={m}><Label text={m} /></MenuButton>)}
        <FileMenu />
      </MenuBar>

      <Toolbar $h={32} $start={203}>
        <Tool aria-label="剪切"><Icon n="copy" col={c.off} /></Tool>
        <Gap $w={5} />
        <Tool aria-label="复制"><Icon n="copy" col={c.off} /></Tool>
        <Gap $w={5} />
        <Tool aria-label="粘贴"><Icon n="paste" /></Tool>
        <Divider />
        <Tool aria-label="撤消"><Icon n="undo" col={c.off} /></Tool>
        <Tool aria-label="撤消列表" $w={16}><Tri $c={c.off} /></Tool>
        <Gap $w={4} />
        <Tool aria-label="重做"><Icon n="redo" /></Tool>
        <Tool aria-label="重做列表" $w={16}><Tri /></Tool>
        <Divider />
        <Tool aria-label="导入"><Icon n="import" /></Tool>
        <Gap $w={5} />
        <Tool aria-label="导出"><Icon n="export" col={c.off} /></Tool>
        <Gap $w={5} />
        <Tool aria-label="发布为 PDF"><Icon n="pdf" col={c.off} /></Tool>
        <Divider />
        <Select w={86} v="58%" name="缩放级别" white small />
        <Gap $w={5} />
        <Tool aria-label="全屏预览"><Icon n="full" /></Tool>
        <Divider />
        <Tool $on aria-label="显示标尺"><Icon n="rulers" /></Tool>
        <Gap $w={5} />
        <Tool aria-label="显示网格"><Icon n="grid" /></Tool>
        <Gap $w={5} />
        <Tool $on aria-label="显示辅助线"><Icon n="guides" /></Tool>
        <Divider />
        <Tool aria-label="贴齐关闭"><Icon n="snap" /></Tool>
        <Gap $w={11} />
        <WordTool><Label text="贴齐(&T)" /><Tri /></WordTool>
        <Divider $m={10} />
        <Tool aria-label="选项" $w={16}><Corner><Icon n="gear" /><CornerMark /></Corner></Tool>
        <Divider $m={10} />
        <WordTool $gap={8}><Icon n="launch" />启动<Gap $w={1} /><Tri /></WordTool>
      </Toolbar>

      <Toolbar $h={43} $start={191}>
        <Stack>
          <Spin w={100} h={17} v="210.0 mm" name="页面宽度" row />
          <Spin w={100} h={17} v="297.0 mm" name="页面高度" row />
        </Stack>
        <Divider />
        <Gap $w={3} />
        <Tool $on aria-label="纵向"><Icon n="portrait" /></Tool>
        <Gap $w={5} />
        <Tool aria-label="横向"><Icon n="landscape" /></Tool>
        <Gap $w={3} />
        <Divider />
        <Gap $w={3} />
        <Tool $on aria-label="所有页面"><Icon n="pages" /></Tool>
        <Gap $w={5} />
        <Tool aria-label="当前页面"><Icon n="bars" /></Tool>
        <Gap $w={3} />
        <Divider />
        <Gap $w={2} />
        <label htmlFor="unit">单位：</label>
        <Gap $w={1} />
        <Select id="unit" w={102} v="毫米" />
        <Divider />
        <Gap $w={3} />
        <Icon n="nudge" />
        <Gap $w={3} />
        <Spin w={80} v="0.1 mm" name="微调距离" />
        <Divider />
        <DupIcons viewBox="0 0 16 34" aria-hidden>
          <path d="M.5 2.500h5v7h-5zM4 11.500v1H8M7 5.500h3.500M7 5.500v7M10.500 5.500V8M9 9l5 6M14 9l-5 6" />
          <path d="M.5 18.500h5v7h-5zM4 27.500v1H8M7 21.500h3.500M7 21.500v7M10.500 21.500V24M9 25l2.500 3l2.500-3M11.500 28v4" />
        </DupIcons>
        <Stack>
          <Spin w={98} h={17} v="5.0 mm" name="再制距离 X" row />
          <Spin w={98} h={17} v="5.0 mm" name="再制距离 Y" row />
        </Stack>
        <Divider />
        <Tool $on aria-label="将所有对象视为已填充"><Icon n="bounds" /></Tool>
        <Divider />
        <Gap $w={5} />
        <Tool aria-label="自定义"><Icon n="plus" col={c.off} /></Tool>
      </Toolbar>

      <Body>
        <Toolbox>
          <Tool aria-label="交互式填充"><Corner><Icon n="bucket" /><CornerMark /></Corner></Tool>
          <ToolboxRule />
          <Tool aria-label="轮廓笔"><Corner><Icon n="pen" /><CornerMark /></Corner></Tool>
          <ToolboxRule />
          <Blank $h={5} />
          <Tool aria-label="自定义工具箱"><Icon n="plus" col={c.off} /></Tool>
        </Toolbox>

        <Centre>
          <DocTabs>
            <DocTab aria-label="文档" />
            <AddTab aria-label="新建文档"><Icon n="plus" col={c.edge} /></AddTab>
          </DocTabs>
          <TopRuler />
          <Desk>
            <SideRuler />
            <DeskMain>
              <CanvasRow>
                <Canvas><Page /></Canvas>
                <VScroll>
                  <ScrollButton aria-label="向上"><Chevron d="up" /></ScrollButton>
                  <Thumb $n={172} $track /><Thumb $n={430} /><Thumb $n={171} $track />
                  <ScrollButton aria-label="向下"><Chevron d="down" /></ScrollButton>
                </VScroll>
              </CanvasRow>
              <BottomBar>
                <PageNav>
                  <NavButton aria-label="前面添加页"><Icon n="addPage" s={10} /></NavButton>
                  <NavButton aria-label="第一页"><NavStop /><Tri $d="left" $s={6} $c={c.off} /></NavButton>
                  <NavButton aria-label="上一页"><Tri $d="left" $s={6} $c={c.off} /></NavButton>
                  <PageCount>1 &nbsp;的 &nbsp;1</PageCount>
                  <NavButton aria-label="下一页"><Tri $d="right" $s={6} $c={c.off} /></NavButton>
                  <NavButton aria-label="最后一页"><Tri $d="right" $s={6} $c={c.off} /><NavStop /></NavButton>
                  <NavButton aria-label="后面添加页"><Icon n="addPage" s={10} /></NavButton>
                  <PageTab>
                    <svg width="48" height="17"><path d="M.5-1L5.500 15.500H42.500L47.500-1" fill="#fff" stroke="#8a8a8a" /></svg>
                    <span>页 1</span>
                  </PageTab>
                  <Grip $w={7} $h={12} $end />
                </PageNav>
                <HScroll>
                  <ScrollButton aria-label="向左"><Chevron d="left" /></ScrollButton>
                  <Thumb $n={1} />
                  <ScrollButton aria-label="向右"><Chevron d="right" /></ScrollButton>
                  <ScrollButton aria-label="缩放"><Icon n="zoomer" s={12} /></ScrollButton>
                </HScroll>
              </BottomBar>
            </DeskMain>
          </Desk>
          <DocPalette>
            <Grip $w={6} $h={16} />
            <Tri $d="right" />
            <IconButton aria-label="吸管"><Icon n="dropperDoc" s={13} /></IconButton>
            <Chevron d="left" s={10} col="#cccccc" />
            <NoneSwatch $w={18} $h={18} $edge="#444" aria-label="无颜色" />
            <Hint>将颜色(或对象)拖动至此处，以便将这些颜色与文档存储在一起</Hint>
            <Chevron d="right" s={10} col="#cccccc" w={2} />
            <Chevron d="dbl" s={10} col="#bbbbbb" w={1.6} />
          </DocPalette>
        </Centre>

        <Dock>
          <DockInner>
            <DockHead>
              <DockTitle>文本</DockTitle>
              <NavButton aria-label="折叠"><Tri $d="right" $s={5} $c={c.edge} /><Tri $d="right" $s={5} $c={c.edge} /></NavButton>
              <IconButton aria-label="关闭泊坞窗"><Svg $s={10} $c="#a5a5a5"><path d="M2 2L14 14M14 2L2 14" strokeWidth="2.600" /></Svg></IconButton>
            </DockHead>
            <DockColumns>
              <DockMain>
                <DockTools>
                  <Tool $on aria-label="字符"><Icon n="A" /></Tool>
                  <Tool aria-label="段落"><Icon n="para" /></Tool>
                  <Tool aria-label="图文框"><Icon n="frame" /></Tool>
                  <Push />
                  <Tool aria-label="导入样式"><Icon n="dockImport" /></Tool>
                  <Divider $m={1} />
                  <Tool $on aria-label="视图"><Icon n="dockView" /></Tool>
                </DockTools>
                <DockScroll>
                  <Form onSubmit={(e) => e.preventDefault()}>
                    <GroupHead>
                      <Tri $d="up" /><GroupName>字符</GroupName><Icon n="cog" s={8} /><Gap $w={0} /><Lock />
                    </GroupHead>
                    <Rows>
                      <Row>
                        <Lead $w={165} $end><Select w={164} v="Arial" name="字体" white small /></Lead>
                        <Lock />
                        <Right><Spin w={65} v="12.0 pt" name="字号" /><Lock /></Right>
                      </Row>
                      <Row>
                        <Lead $w={165} $end><Select w={164} v="常规" name="字形" /></Lead>
                        <Lock />
                        <Right $gap={11}><IconButton aria-label="大写"><Corner><Icon n="caps" col={c.edge} /><CornerMark /></Corner></IconButton><Lock /></Right>
                      </Row>
                      <Blank $h={3} />
                      <Row>
                        <Lead><Icon n="kern" /><Spin w={145} v="" name="字距" dim /></Lead>
                        <Lock />
                        <Right $gap={11}><IconButton aria-label="下划线"><Corner><Icon n="under" /><CornerMark /></Corner></IconButton><Lock /></Right>
                      </Row>
                      <Row $gap={5}>
                        <Lead><Icon n="fillA" /><Select w={145} v="均匀填充" name="填充类型" /></Lead>
                        <Colour col="#231815" name="填充颜色" />
                        <Right $gap={11}><IconButton aria-label="填充设置"><Icon n="dots" /></IconButton><Lock /></Right>
                      </Row>
                      <Row $gap={5}>
                        <Lead><Icon n="fillAb" /><Select w={145} v="无填充" name="背景填充类型" /></Lead>
                        <Colour col="#000" name="背景颜色" />
                        <Right $gap={11}><IconButton aria-label="背景设置"><Icon n="dots" /></IconButton><Lock /></Right>
                      </Row>
                      <Row $gap={5}>
                        <Lead><Icon n="outlineA" /><Select w={145} v="无" name="轮廓宽度" white /></Lead>
                        <Colour name="轮廓颜色" />
                        <Right $gap={11}><IconButton aria-label="轮廓设置"><Icon n="dots" /></IconButton><Lock /></Right>
                      </Row>
                    </Rows>
                    <Expander $top={15} aria-label="更多字符选项"><Tri /></Expander>
                    <GroupRule />

                    <GroupHead>
                      <Tri $d="up" /><GroupName>段落</GroupName><Icon n="cog" s={8} /><Gap $w={0} /><Lock />
                    </GroupHead>
                    <Rows $top={6}>
                      <Row>
                        <AlignTools>
                          <Tool $on aria-label="无水平对齐"><Icon n="alNone" /></Tool>
                          <Tool aria-label="左对齐"><Icon n="alLeft" /></Tool>
                          <Tool aria-label="中对齐"><Icon n="alCenter" /></Tool>
                          <Tool aria-label="右对齐"><Icon n="alRight" /></Tool>
                          <Tool aria-label="两端对齐"><Icon n="alJust" /></Tool>
                          <Tool aria-label="强制两端对齐"><Icon n="alFull" /></Tool>
                        </AlignTools>
                        <Right><Lock /></Right>
                      </Row>
                      <Blank $h={3} />
                      <Row>
                        <Lead><Icon n="leading" /><Spin w={96} v="100.0 %" name="行间距" /></Lead>
                        <Lock />
                        <Right><Select w={114} v="%字符高度" name="行间距单位" /><Lock /></Right>
                      </Row>
                      <Blank $h={3} />
                      <Row>
                        <Lead><Icon n="indLeft" /><Spin w={96} v="0.0 mm" name="左行缩进" /></Lead>
                        <Lock />
                        <Right><Lead><Icon n="spBefore" /><Spin w={95} v="100.0 %" name="段前间距" /></Lead><Lock /></Right>
                      </Row>
                      <Row>
                        <Lead><Icon n="indFirst" /><Spin w={96} v="0.0 mm" name="首行缩进" /></Lead>
                        <Lock />
                        <Right><Lead><Icon n="spAfter" /><Spin w={95} v="0.0 %" name="段后间距" /></Lead><Lock /></Right>
                      </Row>
                      <Row>
                        <Lead><Icon n="indRight" /><Spin w={96} v="0.0 mm" name="右行缩进" /></Lead>
                        <Lock />
                      </Row>
                    </Rows>
                    <Expander $top={7} aria-label="更多段落选项"><Tri /></Expander>
                    <GroupRule />

                    <GroupHead>
                      <Tri $d="up" /><GroupName>图文框</GroupName><Lock />
                    </GroupHead>
                    <Rows $top={6}>
                      <Row>
                        <Lead><Icon n="boxA" /><Colour w={53} name="图文框背景" /></Lead>
                        <Lock />
                        <Pair><IconButton aria-label="基线网格"><Icon n="lineA" /></IconButton><Lock /></Pair>
                        <Pair><IconButton aria-label="垂直对齐"><Corner><Icon n="frameText" /><CornerMark /></Corner></IconButton><Lock /></Pair>
                      </Row>
                      <Row>
                        <Lead><Icon n="cols" /><Spin w={53} v="1" name="栏数" /></Lead>
                        <Lock />
                        <Pair><IconButton aria-label="栏宽相等"><Icon n="colsOff" col={c.off} /></IconButton><Lock /></Pair>
                        <Right $gap={11}><IconButton aria-label="栏设置"><Icon n="dots" /></IconButton><Lock /></Right>
                      </Row>
                    </Rows>
                  </Form>
                  <ScrollRail>
                    <Chevron d="up" s={12} col="#b5b5b5" />
                    <Chevron d="down" s={12} col="#b5b5b5" />
                  </ScrollRail>
                </DockScroll>
              </DockMain>
              <DockTabs>
                <SideTab $on $h={73}><Icon n="styleA" /><SideText>文本</SideText></SideTab>
                <SideTab $h={101}><Icon n="styles" /><SideText>对象样式</SideText></SideTab>
                <SideAdd aria-label="添加泊坞窗"><Icon n="plus" col={c.edge} /></SideAdd>
              </DockTabs>
            </DockColumns>
          </DockInner>
        </Dock>

        <Palette>
          <PaletteTop>
            <Grip $w={16} $h={6} />
            <Tri $d="right" />
            <Icon n="dropper" s={14} col={c.off} />
            <Chevron d="up" s={12} col="#c5c5c5" />
          </PaletteTop>
          <NoneSwatch $w={18} $h={17} $edge="#565656" aria-label="无" />
          <Swatches>
            {colours.map((k, i) => <Swatch key={i} $c={k} aria-label={k} />)}
          </Swatches>
          <PaletteEnd>
            <Chevron d="down" s={13} col="#b5b5b5" />
            <Chevron d="dbl" s={12} col="#b5b5b5" w={1.6} />
          </PaletteEnd>
        </Palette>
      </Body>

      <Status>
        <IconButton aria-label="状态栏选项"><Corner><Icon n="gear" /><CornerMark /></Corner></IconButton>
        <Tip><Label text="接着单击可进行拖动或缩放；再单击可旋转或倾斜；双击工具，可选择所有对象；按住 Shift 键单击可选择多个对象；按住 Alt 键单击可进行挖掘" /></Tip>
        <FillInfo $w={202}>
          <Icon n="bucket" />
          <NoneSwatch $w={22} $h={22} $edge={c.edge} aria-label="填充" />
          无
        </FillInfo>
        <FillInfo $w={258}>
          <Icon n="pen" s={14} />
          <FillBlack aria-label="轮廓" />
          <Ink $w={31}><span>C:</span><span>0</span></Ink>
          <Ink $w={32}><span>M:</span><span>0</span></Ink>
          <Ink $w={30}><span>Y:</span><span>0</span></Ink>
          <Ink $w={41}><span>K:</span><span>100</span></Ink>
        </FillInfo>
        <IconButton aria-label="颜色校样"><Icon n="monitor" /></IconButton>
      </Status>

      <Taskbar><TaskActive /></Taskbar>

      <Ime>
        <span>CH</span>
        <Svg $s={12}><path d="M6 1Q11 7 2 13Q9 16 13 11Q15 5 6 1z" strokeWidth="1.400" /></Svg>
        <span>简</span>
      </Ime>

      <Watermark aria-label="极光下载站">
        <svg width="44" height="42" viewBox="0 0 44 42" aria-hidden>
          <defs>
            <linearGradient id="wb" x1="0" y1="1" x2="1" y2="0"><stop offset="0" stopColor="#2a70b8" /><stop offset="1" stopColor="#48b4e8" /></linearGradient>
            <linearGradient id="wg" x1="0" y1="1" x2="1" y2="0"><stop offset="0" stopColor="#e8dc50" /><stop offset="1" stopColor="#38b878" /></linearGradient>
          </defs>
          <path d="M42 0Q6 4 0 24Q0 34 10 32Q8 14 42 0z" fill="url(#wb)" />
          <path d="M12 21Q24 10 38 16Q46 30 4 41Q32 28 26 20Q20 17 12 21z" fill="url(#wg)" />
          <path d="M10 32Q8 22 16 20Q20 26 28 22Q24 34 10 32z" fill="#3a78c0" opacity=".5" />
        </svg>
        <MarkText>极光下载站<MarkUrl>www.xz7.com</MarkUrl></MarkText>
      </Watermark>

      <Pointer viewBox="0 0 13 20" aria-hidden>
        <path d="M1 1V16L4.500 12.800L7 18.500L9.300 17.500L7 12H11.800z" fill="#fff" stroke="#223" />
      </Pointer>
    </Shell>
  );
}
